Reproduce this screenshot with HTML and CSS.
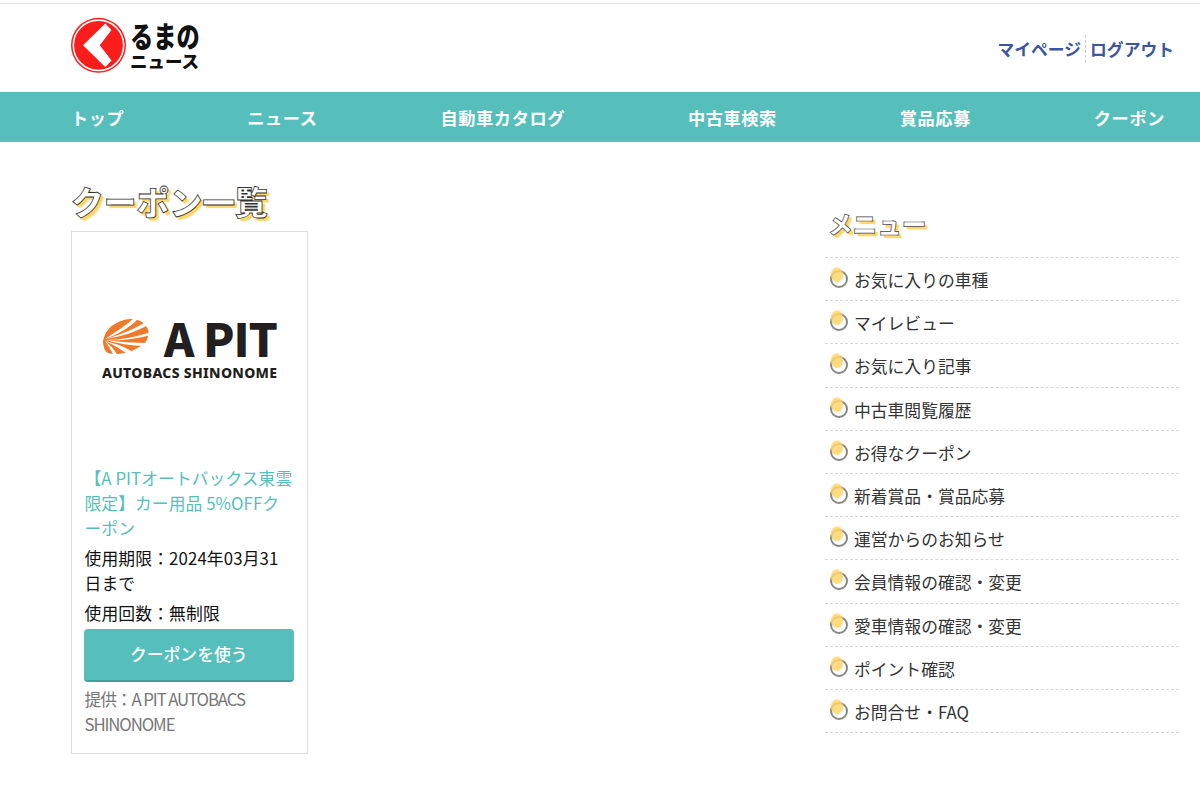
FILE: index.html
```html
<!DOCTYPE html>
<html lang="ja">
<head>
    <meta charset="UTF-8">
    <title>クーポン一覧</title>
    <link rel="stylesheet" href="styles.css">
</head>
<body>

<header class="site-header">
    <a class="logo" href="#">
        <svg class="logo-mark" width="60" height="60" viewBox="0 0 60 60">
            <circle cx="28.5" cy="29.3" r="27.5" fill="#fb1c1c"/>
            <circle cx="28.5" cy="29.3" r="25.2" fill="none" stroke="#fff" stroke-width="1.6"/>
            <path d="M13 29.3 L35.3 7.5 L41.5 14 L29.8 29.3 L41.5 44.6 L35.3 51 Z" fill="#fff"/>
        </svg>
        <span class="logo-text">
            <span class="logo-top">るまの</span>
            <span class="logo-bottom">ニュース</span>
        </span>
    </a>
    <div class="user-links">
        <a href="#">マイページ</a>
        <a href="#">ログアウト</a>
    </div>
</header>

<nav class="global-nav">
    <a href="#">トップ</a>
    <a href="#">ニュース</a>
    <a href="#">自動車カタログ</a>
    <a href="#">中古車検索</a>
    <a href="#">賞品応募</a>
    <a href="#">クーポン</a>
</nav>

<div class="page">
    <main class="main-col">
        <h1 class="page-title">クーポン一覧</h1>
        <div class="coupon-card">
            <div class="coupon-image">
                <svg width="178" height="90" viewBox="0 -20 178 90">
                    <!-- fan mark -->
                    <path d="M1 24 C3 15 8 9 13 7 C19 3 25 2 30 2 C37 2 44 6 46.5 14 C47 18 45 23 43 26 C36 32 26 36 16 37 C9 37.5 4 36 3 33 C1.5 30 1 27 1 24 Z" fill="#ee7a2d"/>
                    <g fill="#fff">
                        <path d="M3 22 C15 14 25 8 33 0 L36 2 C28 10 17 17 3 22 Z"/>
                        <path d="M3 22 C18 18 32 12 44 5 L46 8 C34 15 18 20 3 22 Z"/>
                        <path d="M3 23 C18 23 34 20 49 15 L49 18 C34 22 18 24 3 23 Z"/>
                        <path d="M3 23 C18 25 32 26 46 26 L43 29 C30 29 15 26 3 23 Z"/>
                        <path d="M3 24 C12 26 24 30 32 36 L28 38 C19 33 11 27 3 24 Z"/>
                        <path d="M3 24 C8 28 13 33 16 39 L12 39 C9 33 6 28 3 24 Z"/>
                    </g>
                    <text class="apit-name" x="62" y="40" textLength="114">A PIT</text>
                    <text class="apit-sub" x="0" y="61" textLength="175">AUTOBACS SHINONOME</text>
                </svg>
            </div>
            <a class="coupon-name" href="#">【A PITオートバックス東雲限定】カー用品 5%OFFクーポン</a>
            <p class="coupon-info">使用期限：2024年03月31日まで</p>
            <p class="coupon-info">使用回数：無制限</p>
            <a class="coupon-btn" href="#">クーポンを使う</a>
            <p class="coupon-provider">提供：A PIT AUTOBACS SHINONOME</p>
        </div>
    </main>

    <aside class="side-col">
        <h2 class="side-title">メニュー</h2>
        <ul class="side-menu">
            <li><a href="#">お気に入りの車種</a></li>
            <li><a href="#">マイレビュー</a></li>
            <li><a href="#">お気に入り記事</a></li>
            <li><a href="#">中古車閲覧履歴</a></li>
            <li><a href="#">お得なクーポン</a></li>
            <li><a href="#">新着賞品・賞品応募</a></li>
            <li><a href="#">運営からのお知らせ</a></li>
            <li><a href="#">会員情報の確認・変更</a></li>
            <li><a href="#">愛車情報の確認・変更</a></li>
            <li><a href="#">ポイント確認</a></li>
            <li><a href="#">お問合せ・FAQ</a></li>
        </ul>
    </aside>
</div>

</body>
</html>
```

FILE: styles.css
```css
* {
    box-sizing: border-box;
}
body {
    margin: 0;
    padding-top: 3px;
    background-color: #fff;
    font-family: "Noto Sans CJK JP", "Noto Sans", sans-serif;
    color: #333;
}
a {
    text-decoration: none;
}
/* Header */
.site-header {
    height: 89px;
    padding: 12px 26px 0 70px;
    border-top: 1px solid #e0e4e4;
    display: flex;
    justify-content: space-between;
}
.logo {
    display: flex;
    align-items: flex-start;
    color: #111;
}
.logo-text {
    display: flex;
    flex-direction: column;
    margin-top: 2px;
}
.logo-top {
    font-size: 29px;
    font-weight: 900;
    line-height: 34px;
    transform: scaleX(0.8);
    transform-origin: left center;
}
.logo-bottom {
    font-size: 17.5px;
    font-weight: 900;
    line-height: 17px;
}
.user-links {
    display: flex;
    align-items: center;
    height: 44px;
    margin-top: 11px;
}
.user-links a {
    color: #3b55a0;
    font-size: 16.8px;
    font-weight: 700;
    line-height: 28px;
}
.user-links a + a {
    border-left: 1px dashed #ccc;
    margin-left: 4px;
    padding-left: 4px;
}
/* Global nav */
.global-nav {
    height: 50px;
    padding: 0 35px 0 71px;
    background-color: #56bfbb;
    display: flex;
    justify-content: space-between;
    align-items: center;
}
.global-nav a {
    color: #fff;
    font-size: 17.2px;
    font-weight: 700;
    letter-spacing: 0.6px;
}
/* Columns */
.page {
    display: flex;
    justify-content: space-between;
    padding: 0 21px 0 71px;
}
.main-col {
    width: 237px;
}
.page-title {
    margin: 35px 0 0;
    width: 300px;
    height: 54px;
    font-size: 32.8px;
    font-weight: 900;
    line-height: 48px;
    color: #fff;
    -webkit-text-stroke: 0.8px #333;
    text-shadow: 3px 3px 1px #ffd56b;
}
.coupon-card {
    border: 1px solid #ddd;
    padding: 0 13px 0 12.5px;
    height: 523px;
}
.coupon-image {
    height: 234px;
    padding: 65px 0 0 17px;
    display: flex;
    justify-content: flex-start;
    align-items: flex-start;
}
.apit-name {
    font-family: "Noto Sans CJK JP", sans-serif;
    font-size: 46px;
    font-weight: 900;
    fill: #231f20;
}
.apit-sub {
    font-family: "Noto Sans", sans-serif;
    font-size: 14px;
    font-weight: 800;
    fill: #231f20;
}
.coupon-name {
    display: block;
    color: #56bfbb;
    font-size: 16.8px;
    line-height: 25px;
    letter-spacing: 0.06px;
}
.coupon-info {
    margin: 5px 0 0;
    color: #111;
    font-size: 16.8px;
    line-height: 25px;
    letter-spacing: 0.13px;
}
.coupon-btn {
    display: block;
    height: 53px;
    margin: 3px 0 0 -1px;
    background-color: #56bfbb;
    border-bottom: 2px solid #3f9f9b;
    border-radius: 4px;
    color: #fff;
    font-size: 16.8px;
    font-weight: 500;
    line-height: 51px;
    text-align: center;
}
.coupon-provider {
    margin: 5px 0 0;
    color: #777;
    font-size: 16.8px;
    line-height: 25px;
    letter-spacing: -1.1px;
}
/* Side menu */
.side-col {
    width: 354px;
}
.side-title {
    margin: 66px 0 0 3px;
    height: 49px;
    font-size: 24.6px;
    font-weight: 900;
    line-height: 31px;
    color: #fff;
    -webkit-text-stroke: 0.7px #444;
    text-shadow: 3px 3px 1px #ffd56b;
}
.side-menu {
    list-style: none;
    margin: 0;
    padding: 0;
    border-top: 1px dashed #d8d8d8;
}
.side-menu li {
    height: 43.2px;
    border-bottom: 1px dashed #d8d8d8;
    position: relative;
    padding-left: 29px;
}
/* round bullet: grey ring with a yellow dot sitting slightly above it */
.side-menu li::before {
    content: "";
    position: absolute;
    left: 5px;
    top: 12px;
    width: 14px;
    height: 14px;
    border-radius: 50%;
    border: 2px solid #888;
}
.side-menu li::after {
    content: "";
    position: absolute;
    left: 6px;
    top: 10px;
    width: 12px;
    height: 14px;
    border-radius: 50%;
    background-color: #ffd56b;
    opacity: 0.85;
    box-shadow: 0 -1px 1px rgba(255, 213, 107, 0.6);
}
.side-menu a {
    color: #333;
    font-size: 16.8px;
    line-height: 44px;
}
```
